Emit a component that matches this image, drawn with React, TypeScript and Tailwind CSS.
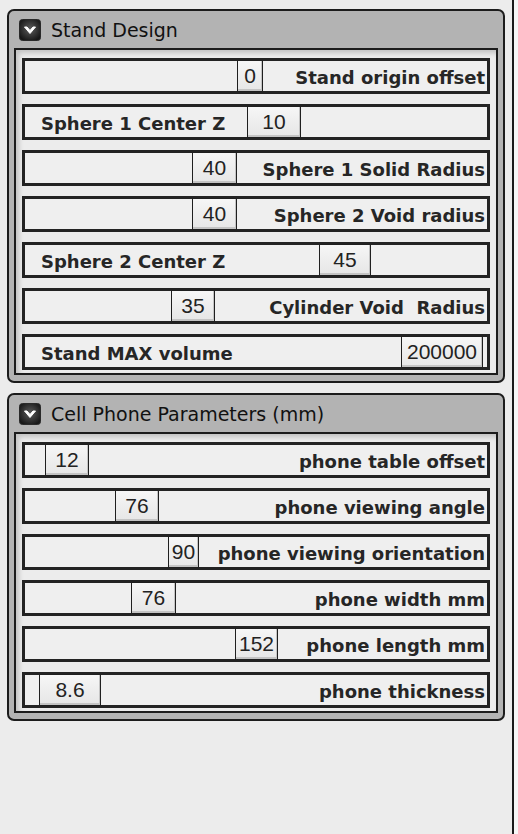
import React from "react";

type Slider = {
  label: string;
  value: string;
  left: number;
  width: number;
  align: "left" | "right";
};

const standRows: Slider[] = [
  { label: "Stand origin offset", value: "0", left: 212, width: 26, align: "right" },
  { label: "Sphere 1 Center Z", value: "10", left: 222, width: 54, align: "left" },
  { label: "Sphere 1 Solid Radius", value: "40", left: 167, width: 45, align: "right" },
  { label: "Sphere 2 Void radius", value: "40", left: 167, width: 45, align: "right" },
  { label: "Sphere 2 Center Z", value: "45", left: 294, width: 52, align: "left" },
  { label: "Cylinder Void\u00a0 Radius", value: "35", left: 146, width: 44, align: "right" },
  { label: "Stand MAX volume", value: "200000", left: 376, width: 82, align: "left" },
];

const phoneRows: Slider[] = [
  { label: "phone table offset", value: "12", left: 20, width: 44, align: "right" },
  { label: "phone viewing angle", value: "76", left: 90, width: 44, align: "right" },
  { label: "phone viewing orientation", value: "90", left: 143, width: 31, align: "right" },
  { label: "phone width mm", value: "76", left: 106, width: 45, align: "right" },
  { label: "phone length mm", value: "152", left: 210, width: 43, align: "right" },
  { label: "phone thickness", value: "8.6", left: 14, width: 62, align: "right" },
];

// disclosure triangle, drawn like the old mac toggle
const Toggle = () => (
  <svg width="22" height="22" viewBox="0 0 22 22">
    <defs>
      <radialGradient id="tg" cx="50%" cy="45%" r="60%">
        <stop offset="0%" stopColor="#5c5c5c" />
        <stop offset="100%" stopColor="#171717" />
      </radialGradient>
    </defs>
    <rect x="0.5" y="0.5" width="21" height="21" rx="3" fill="url(#tg)" stroke="#2a2a2a" />
    <polygon points="5.5,8 11,14.5 16.5,8 14,8 11,11.5 8,8" fill="#ffffff" stroke="#ffffff" strokeWidth="1" strokeLinejoin="round" />
  </svg>
);

const Row = ({ row }: { row: Slider }) => (
  <div
    className={`relative flex h-[36px] items-center border-[3px] border-[#232323] bg-[#efefef] ${
      row.align === "right" ? "justify-end pr-[2px]" : "justify-start pl-[16px]"
    }`}
  >
    <span className="pt-[3px] font-['DejaVu_Sans',sans-serif] text-[18px] font-bold leading-none text-[#262626] whitespace-pre">
      {row.label}
    </span>
    <div
      className="absolute top-[-1px] bottom-[-1px] flex items-center justify-center border border-[#1f1f1f] bg-gradient-to-b from-[#f6f6f6] to-[#e6e6e6] pb-[1px] shadow-[inset_-1px_-2px_0_#c4c4c4] font-['Liberation_Sans',Arial,sans-serif] text-[21px] leading-none text-[#222]"
      style={{ left: row.left, width: row.width }}
    >
      {row.value}
    </div>
  </div>
);

const Panel = ({ title, rows }: { title: string; rows: Slider[] }) => (
  <div className="rounded-[7px] border-2 border-[#1c1c1c] bg-[#b3b3b3] px-[5px] pb-[6px]">
    <div className="flex h-[37px] items-center gap-[10px] pl-[5px]">
      <Toggle />
      <span className="pt-[2px] font-['DejaVu_Sans',sans-serif] text-[19px] leading-none text-[#111]">
        {title}
      </span>
    </div>
    <div className="flex flex-col gap-[10px] border-2 border-[#1c1c1c] bg-[#ececec] px-[6px] pt-[8px] pb-[3px] shadow-[inset_3px_3px_5px_rgba(0,0,0,0.18)]">
      {rows.map((r, i) => (
        <Row key={i} row={r} />
      ))}
    </div>
  </div>
);

export default function App() {
  return (
    <div className="flex min-h-screen w-full bg-[#ececec]">
      <div className="flex w-[512px] flex-col gap-[10px] pl-[7px] pr-[7px] pt-[9px]">
        <Panel title="Stand Design" rows={standRows} />
        <Panel title="Cell Phone Parameters (mm)" rows={phoneRows} />
      </div>
      <div className="flex-1 border-l-2 border-[#1a1a1a] bg-[#f7f7f7]" />
    </div>
  );
}
